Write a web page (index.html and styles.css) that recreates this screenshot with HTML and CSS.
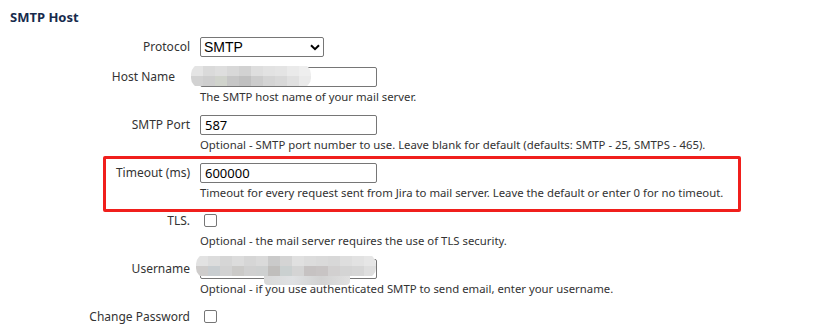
FILE: index.html
```html
<!DOCTYPE html>
<html lang="en">

<head>
    <meta charset="UTF-8">
    <title>Mail Server</title>
    <link rel="stylesheet" href="styles.css">
</head>

<body>
    <h3 class="section-title">SMTP Host</h3>
    <div class="form">
        <div class="field">
            <label>Protocol</label>
            <div class="value">
                <div class="select-wrap">
                    <select class="select">
                        <option>SMTP</option>
                        <option>SECURE_SMTP</option>
                    </select>
                    <svg class="chevron" width="10" height="7" viewBox="0 0 10 7">
                        <path d="M1 1.2 L5 5.2 L9 1.2" fill="none" stroke="#000" stroke-width="2"/>
                    </svg>
                </div>
            </div>
        </div>
        <div class="field">
            <label>Host Name<span class="required"></span></label>
            <div class="value">
                <div class="masked">
                    <input type="text" class="text">
                    <div class="mosaic mosaic-host">
                        <span style="background:#e4e4e4"></span><span style="background:#dadada"></span><span style="background:#dedede"></span><span style="background:#d8d8d8"></span><span style="background:#d2d2d2"></span><span style="background:#dedede"></span><span style="background:#e2e2e2"></span><span style="background:#e4e4e4"></span><span style="background:#eaeaea"></span><span style="background:#eeeeee"></span>
                        <span style="background:#d2d2d2"></span><span style="background:#cecece"></span><span style="background:#d0d3cc"></span><span style="background:#c6c6c6"></span><span style="background:#c0c0c0"></span><span style="background:#cccccc"></span><span style="background:#d4d4d4"></span><span style="background:#d8d8d8"></span><span style="background:#e0e0e0"></span><span style="background:#eaeaea"></span>
                    </div>
                </div>
                <div class="description">The SMTP host name of your mail server.</div>
            </div>
        </div>
        <div class="field">
            <label>SMTP Port</label>
            <div class="value">
                <input type="text" class="text" value="587">
                <div class="description">Optional - SMTP port number to use. Leave blank for default (defaults: SMTP - 25, SMTPS - 465).</div>
            </div>
        </div>
        <div class="field highlighted">
            <label>Timeout (ms)</label>
            <div class="value">
                <input type="text" class="text" value="600000">
                <div class="description">Timeout for every request sent from Jira to mail server. Leave the default or enter 0 for no timeout.</div>
            </div>
        </div>
        <div class="field">
            <label>TLS.</label>
            <div class="value">
                <input type="checkbox" class="check">
                <div class="description">Optional - the mail server requires the use of TLS security.</div>
            </div>
        </div>
        <div class="field">
            <label>Username</label>
            <div class="value">
                <div class="masked">
                    <input type="text" class="text">
                    <div class="mosaic mosaic-user">
                        <span style="background:#e2e2e2"></span><span style="background:#dcdcdc"></span><span style="background:#d6d6d6"></span><span style="background:#dcdcdc"></span><span style="background:#d6d6d6"></span><span style="background:#dadada"></span><span style="background:#cacaca"></span><span style="background:#d4d4d4"></span><span style="background:#e0e0e0"></span><span style="background:#dcdcdc"></span><span style="background:#dadada"></span><span style="background:#d8d8d8"></span><span style="background:#dedede"></span><span style="background:#e2e2e2"></span><span style="background:#e6e6e6"></span>
                        <span style="background:#cecccb"></span><span style="background:#c8cdd0"></span><span style="background:#d2d2d2"></span><span style="background:#cbcac8"></span><span style="background:#d0d0d0"></span><span style="background:#ced0d0"></span><span style="background:#c0beBc"></span><span style="background:#cad0d0"></span><span style="background:#d4d4d4"></span><span style="background:#c6c2c2"></span><span style="background:#c8c4c4"></span><span style="background:#d2d0d0"></span><span style="background:#d4d4d4"></span><span style="background:#d6d6d6"></span><span style="background:#dedede"></span>
                    </div>
                    <div class="mosaic-tail"></div>
                </div>
                <div class="description">Optional - if you use authenticated SMTP to send email, enter your username.</div>
            </div>
        </div>
        <div class="field">
            <label>Change Password</label>
            <div class="value">
                <input type="checkbox" class="check">
            </div>
        </div>
    </div>
</body>

</html>
```

FILE: styles.css
```css
body {
    margin: 0;
    padding: 9px 10px 10px;
    font-family: "Noto Sans", "Open Sans", sans-serif;
    font-size: 12px;
    color: #333;
    background-color: #fff;
}

.section-title {
    margin: 0 0 12px;
    font-size: 13px;
    font-weight: bold;
    color: #172b4d;
    line-height: 16px;
}

.form {
    display: flex;
    flex-direction: column;
    gap: 10px;
    margin-left: -10px;
}

.field {
    display: grid;
    grid-template-columns: 190px 1fr;
    column-gap: 10px;
    position: relative;
}

.field label {
    text-align: right;
    font-size: 12px;
    line-height: 20px;
    color: #333;
}

.required {
    display: inline-block;
    width: 15px;
}

.value {
    display: flex;
    flex-direction: column;
    align-items: flex-start;
}

.select-wrap {
    position: relative;
}

.select {
    appearance: none;
    width: 124px;
    height: 20px;
    padding: 0 0 0 3px;
    border: 1px solid #767676;
    border-radius: 2px;
    background: #fff;
    font-family: "Liberation Sans", Arial, sans-serif;
    font-size: 14px;
    color: #000;
    box-sizing: border-box;
}

.chevron {
    position: absolute;
    right: 4px;
    top: 7px;
    pointer-events: none;
}

.text {
    width: 177px;
    height: 20px;
    padding: 0 4px;
    border: 1px solid #767676;
    border-radius: 2px;
    font-family: "Noto Sans", "Open Sans", sans-serif;
    font-size: 13px;
    color: #000;
    box-sizing: border-box;
    margin: 0;
}

.description {
    margin-top: 2px;
    line-height: 16px;
    font-size: 11.35px;
    color: #333;
}

.check {
    appearance: none;
    width: 13px;
    height: 13px;
    margin: 3px 0 4px 4px;
    border: 1px solid #767676;
    border-radius: 2px;
    background: #fff;
}

.highlighted::after {
    content: "";
    position: absolute;
    left: 103px;
    top: -7px;
    width: 632px;
    height: 50px;
    border: 3px solid #f01f1c;
    border-radius: 2px;
}

.masked {
    position: relative;
}

.mosaic {
    position: absolute;
    display: grid;
    grid-auto-rows: 10px;
    filter: blur(0.7px);
    border-radius: 10px;
    overflow: hidden;
}

.mosaic-host {
    left: -9px;
    top: -3px;
    grid-template-columns: repeat(10, 12px);
    padding: 2px 0;
}

.mosaic-user {
    left: -4px;
    top: -5px;
    grid-template-columns: repeat(15, 12px);
    padding: 2px 0;
}

.mosaic-tail {
    position: absolute;
    left: 64px;
    top: 17px;
    width: 86px;
    height: 9px;
    background: linear-gradient(90deg, #d8d8d8, #dfe1e3, #d2d2d2, #e0e0e0);
    filter: blur(0.7px);
    border-radius: 0 0 4px 4px;
}
```
